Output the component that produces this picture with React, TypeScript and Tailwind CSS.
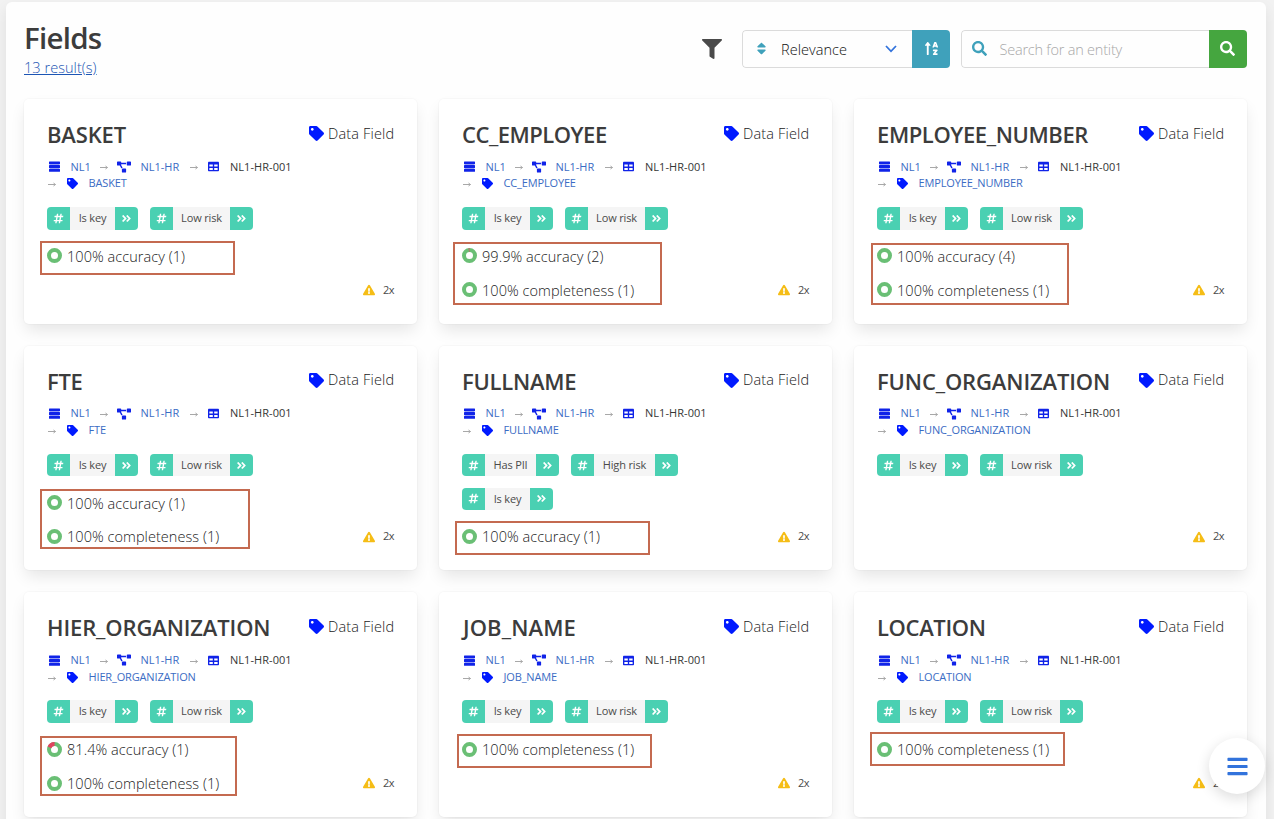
import {
  FaProjectDiagram, FaTable, FaTag, FaHashtag, FaAngleDoubleRight,
  FaExclamationTriangle, FaFilter, FaSort, FaSortAlphaUp, FaSearch, FaBars,
} from 'react-icons/fa'

type Metric = { value: string; failed: number }
type Field = {
  name: string
  title: string
  tags: string[]
  metrics: Metric[]
  box?: string
}

const low = ['Is key', 'Low risk']
const accuracy: Metric = { value: '100% accuracy (1)', failed: 0 }
const completeness: Metric = { value: '100% completeness (1)', failed: 0 }

const fields: Field[] = [
  { name: 'BASKET', title: 'tracking-[-0.15px]', tags: low, metrics: [accuracy], box: 'left-[16px] top-[142px] w-[195px] h-[34px]' },
  { name: 'CC_EMPLOYEE', title: 'tracking-[-0.5px]', tags: low, metrics: [{ value: '99.9% accuracy (2)', failed: 2 }, completeness], box: 'left-[14px] top-[143px] w-[209px] h-[63px]' },
  { name: 'EMPLOYEE_NUMBER', title: 'tracking-[-0.4px]', tags: low, metrics: [{ value: '100% accuracy (4)', failed: 0 }, completeness], box: 'left-[17px] top-[144px] w-[198px] h-[62px]' },
  { name: 'FTE', title: 'tracking-[-0.3px]', tags: low, metrics: [accuracy, completeness], box: 'left-[16px] top-[143px] w-[210px] h-[60px]' },
  { name: 'FULLNAME', title: 'tracking-[-0.25px]', tags: ['Has PII', 'High risk', 'Is key'], metrics: [accuracy], box: 'left-[16px] top-[175px] w-[195px] h-[34px]' },
  { name: 'FUNC_ORGANIZATION', title: 'tracking-[-0.13px]', tags: low, metrics: [] },
  { name: 'HIER_ORGANIZATION', title: 'tracking-[-0.13px]', tags: low, metrics: [{ value: '81.4% accuracy (1)', failed: 18.6 }, completeness], box: 'left-[16px] top-[144px] w-[197px] h-[60px]' },
  { name: 'JOB_NAME', title: 'tracking-[0.1px] pl-px', tags: low, metrics: [completeness], box: 'left-[18px] top-[142px] w-[195px] h-[34px]' },
  { name: 'LOCATION', title: 'tracking-[-0.35px]', tags: low, metrics: [completeness], box: 'left-[16px] top-[140px] w-[195px] h-[34px]' },
]

const tagWidths: Record<string, string> = {
  'Is key': 'w-[45px]',
  'Low risk': 'w-[57px]',
  'Has PII': 'w-[51px]',
  'High risk': 'w-[61px]',
}

function Ring({ failed }: { failed: number }) {
  return (
    <svg className="size-[15px] shrink-0 mb-px" viewBox="0 0 15 15">
      <circle cx="7.5" cy="7.5" r="5.5" fill="none" stroke="#6abf75" strokeWidth="4" />
      {failed > 0 && (
        <circle cx="7.5" cy="7.5" r="5.5" fill="none" stroke="#e04560" strokeWidth="4" pathLength={100}
          strokeDasharray={`${failed} ${100 - failed}`} transform={`rotate(${-90 - failed * 3.6} 7.5 7.5)`} />
      )}
    </svg>
  )
}

function ServerIcon() {
  return (
    <svg className="w-[11px] h-[11px] shrink-0 ml-[2px] mr-[10.5px]" viewBox="0 0 11 11" fill="#1023e8">
      <rect x="0" y="0.4" width="11" height="2.9" rx="0.5" />
      <rect x="0" y="4.1" width="11" height="2.9" rx="0.5" />
      <rect x="0" y="7.8" width="11" height="2.9" rx="0.5" />
      <path d="M0.8 3.3H10.2V4.1H0.8ZM0.8 7H10.2V7.8H0.8Z" fillOpacity="0.35" />
    </svg>
  )
}

function Arrow() {
  return (
    <svg className="w-[8px] h-[5px] shrink-0 mt-[2px]" viewBox="0 0 8 5">
      <path d="M0 2.5H7.5M5.5 1L7.5 2.5L5.5 4" fill="none" stroke="#a8a8a8" strokeWidth="1" />
    </svg>
  )
}

function Tag({ label }: { label: string }) {
  return (
    <div className="flex h-[22.5px] rounded-[4px] overflow-hidden text-[11px]">
      <span className="w-[23px] bg-[#4ad0b2] text-white flex items-center justify-center"><FaHashtag size={11} /></span>
      <span className={`${tagWidths[label]} bg-[#f5f5f5] text-[#4a4a4a] flex items-center justify-center whitespace-nowrap tracking-[-0.15px]`}>{label}</span>
      <span className="w-[23px] bg-[#4ad0b2] text-white flex items-center justify-center"><FaAngleDoubleRight size={11} /></span>
    </div>
  )
}

function Card({ f }: { f: Field }) {
  return (
    <article className="relative bg-white rounded-[5px] px-[23px] pt-[21px] shadow-[0_8px_16px_-2px_rgba(10,10,10,0.1),0_0_0_1px_rgba(10,10,10,0.02)]">
      <header className="flex justify-between h-[28px]">
        <h2 className={`text-[22px] leading-[28px] font-semibold text-[#3c3c3c] whitespace-nowrap ${f.title}`}>{f.name}</h2>
        <div className="flex items-center h-[25px] mt-px text-[14.5px] font-light text-[#222]">
          <FaTag size={15} color="#001aff" className="mr-[4px]" />
          <span className="w-[66px] whitespace-nowrap tracking-[0.17px]">Data Field</span>
        </div>
      </header>
      <nav className="mt-[10.5px] text-[11px] leading-[16.8px] text-[#3b6cc4] whitespace-nowrap">
        <div className="flex items-center h-[16.8px]">
          <ServerIcon />
          <span className="w-[29.5px]">NL1</span>
          <Arrow />
          <FaProjectDiagram size={14} color="#1023e8" className="ml-[9px] mr-[9.5px]" />
          <span className="w-[49.5px]">NL1-HR</span>
          <Arrow />
          <FaTable size={11} color="#1023e8" className="ml-[10px] mr-[11px]" />
          <span className="text-[#363636] tracking-[0.05px]">NL1-HR-001</span>
        </div>
        <div className="flex items-center h-[16.8px]">
          <span className="ml-px flex"><Arrow /></span>
          <FaTag size={11} color="#001aff" className="ml-[11px] mr-[10.5px]" />
          <span className="tracking-[-0.15px]">{f.name}</span>
        </div>
      </nav>
      <div className="mt-[15px] flex flex-wrap gap-x-[12px] gap-y-[11.3px] w-[300px]">
        {f.tags.map((t) => <Tag key={t} label={t} />)}
      </div>
      <div className="mt-[10px] flex flex-col">
        {f.metrics.map((m) => (
          <div key={m.value} className="flex items-center h-[33.8px] text-[14.5px] font-light text-[#222] tracking-[0.05px] whitespace-nowrap">
            <Ring failed={m.failed} />
            <span className="ml-[5px] pt-[0.5px]">{m.value}</span>
          </div>
        ))}
      </div>
      <div className="absolute right-[23px] top-[182px] h-[18px] flex items-center text-[11px] text-[#4a4a4a]">
        <FaExclamationTriangle size={12} color="#f5bd16" />
        <span className="ml-[8px] w-[11px] whitespace-nowrap tracking-[-0.5px]">2x</span>
      </div>
      {f.box && <div className={`absolute border-2 border-[#c46a50] ${f.box}`} />}
    </article>
  )
}

export default function App() {
  return (
    <div className="h-[819px] overflow-hidden bg-[#f2f2f2] pl-[6px] pr-[8px] pt-[2px] font-['Open_Sans','Noto_Sans',sans-serif]">
      <main className="h-[840px] bg-[#fefefe] rounded-[6px] pl-[18px] pr-[19px] pt-[20px] shadow-[0_6px_14px_rgba(10,10,10,0.08)]">
        <div className="flex justify-between h-[77px]">
          <div>
            <h1 className="text-[29.5px] leading-[31px] pb-[2px] font-semibold text-[#3c3c3c] tracking-[-0.75px]">Fields</h1>
            <a href="#" className="block w-max mt-[2px] text-[14.5px] leading-[22px] font-light text-[#1c55b4] underline tracking-[0.05px]">13 result(s)</a>
          </div>
          <div className="flex h-[38px] mt-[8px]">
            <FaFilter size={20} color="#4a4a4a" className="mt-[9px] mr-[20px]" />
            <div className="flex w-[208px] mr-[11px] rounded-[4px] overflow-hidden">
              <div className="w-[170px] border border-r-0 border-[#dbdbdb] rounded-l-[4px] flex items-center pl-[11px] text-[14.5px] text-[#111]">
                <FaSort size={15} color="#3fa1bb" className="mb-[2px]" />
                <span className="ml-[12px] mt-px w-[68px] font-light tracking-[0.05px]">Relevance</span>
                <svg className="ml-[36px] w-[12px] h-[8px]" viewBox="0 0 12 8"><path d="M1 1L6 6.3L11 1" fill="none" stroke="#3273dc" strokeWidth="1.8" /></svg>
              </div>
              <button className="w-[38px] bg-[#3fa1bb] text-white flex items-center justify-center pb-[2px]"><FaSortAlphaUp size={15} /></button>
            </div>
            <div className="flex w-[286px] rounded-[4px] overflow-hidden">
              <div className="w-[248px] border border-r-0 border-[#dbdbdb] rounded-l-[4px] flex items-center pl-[10px] text-[14.5px] font-light text-[#a8a8a8]">
                <FaSearch size={15} color="#3fa1bb" className="mb-[2px]" />
                <span className="ml-[12.5px] mt-px whitespace-nowrap tracking-[-0.22px]">Search for an entity</span>
              </div>
              <button className="w-[38px] bg-[#45a63f] text-white flex items-center justify-center pb-[2px] pr-px"><FaSearch size={15} /></button>
            </div>
          </div>
        </div>
        <section className="grid grid-cols-3 auto-rows-[224.5px] gap-x-[22px] gap-y-[22.2px] w-[1223px]">
          {fields.map((f) => <Card key={f.name} f={f} />)}
        </section>
      </main>
      <button className="fixed left-[1209px] top-[738px] size-[56px] rounded-full bg-white flex items-center justify-center shadow-[0_4px_14px_rgba(10,10,10,0.14)]">
        <FaBars size={23} color="#3273dc" />
      </button>
    </div>
  )
}
